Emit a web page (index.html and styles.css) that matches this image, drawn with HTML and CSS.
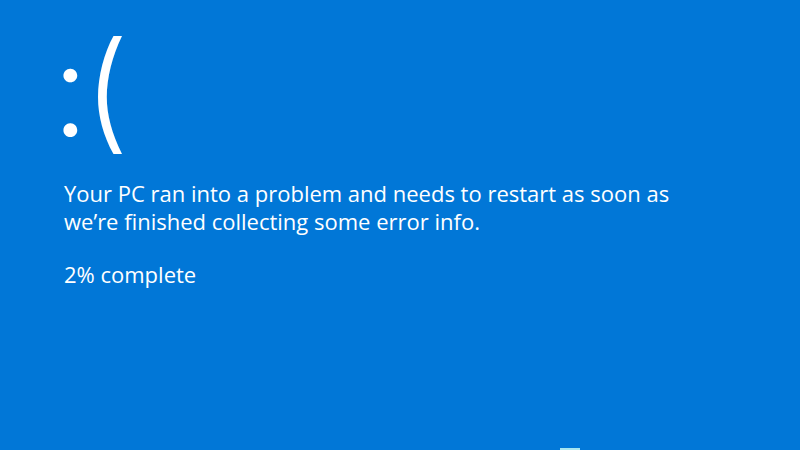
FILE: index.html
```html
<!DOCTYPE html>
<html lang="en">
<head>
<meta charset="utf-8">
<title>BSOD</title>
<link rel="stylesheet" href="styles.css">
</head>
<body>
<main class="screen">
  <div class="face">:(</div>
  <p class="message">Your PC ran into a problem and needs to restart as soon as<br>we’re finished collecting some error info.</p>
  <p class="progress">2% complete</p>
  <div class="footer"><span class="qr"></span></div>
</main>
</body>
</html>
```
FILE: styles.css
```css
html, body {
  margin: 0;
  padding: 0;
  width: 800px;
  height: 450px;
  overflow: hidden;
  background: #0177d7;
}
.screen {
  box-sizing: border-box;
  width: 800px;
  height: 450px;
  padding: 24px 0 0 64px;
  display: flex;
  flex-direction: column;
  color: #ffffff;
  font-family: "Open Sans", "Noto Sans", sans-serif;
}
.face {
  font-family: "Inter", "Open Sans", sans-serif;
  font-size: 130px;
  font-weight: 350;
  line-height: 130px;
  height: 155px;
  margin-left: -12px;
  letter-spacing: -5px;
}
.message {
  margin: 0;
  font-size: 22px;
  line-height: 28px;
}
.progress {
  margin: 25px 0 0;
  font-size: 22px;
  line-height: 28px;
}
.footer {
  flex: 1;
  display: flex;
  align-items: flex-end;
  padding-left: 496px;
}
.qr {
  width: 20px;
  height: 2px;
  background: #a8e6f0;
}
```
